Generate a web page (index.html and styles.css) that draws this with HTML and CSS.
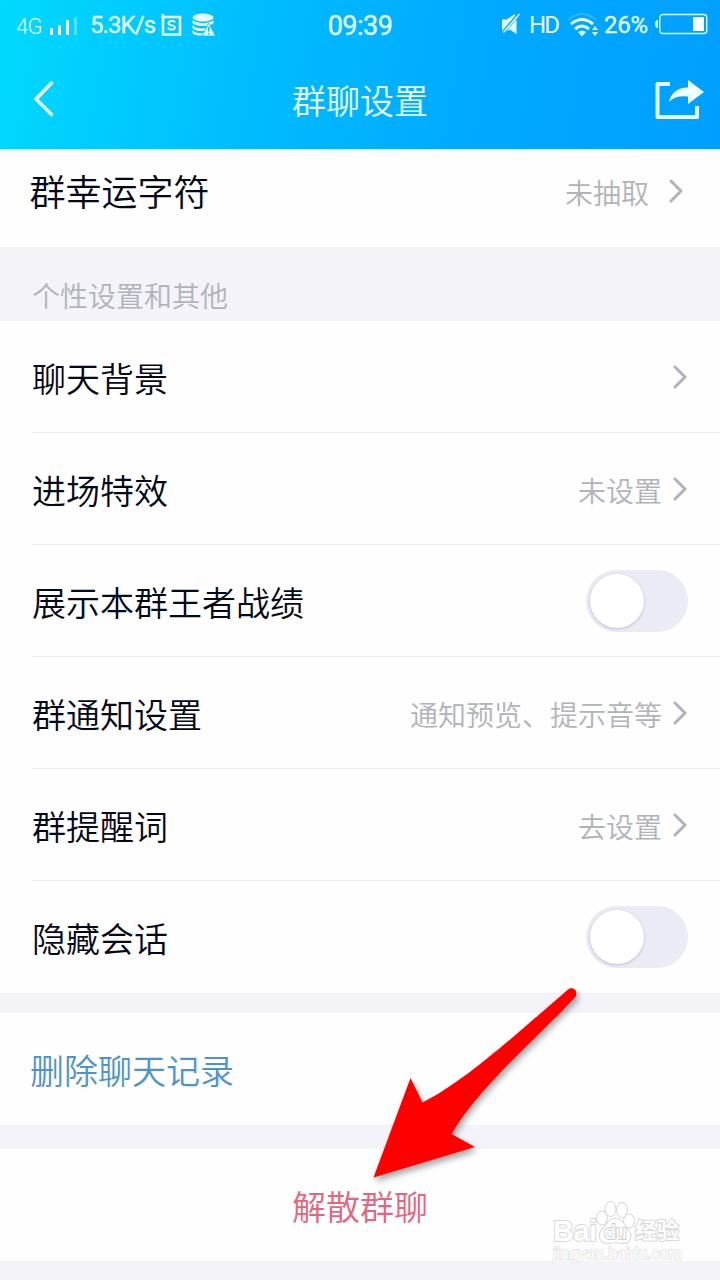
FILE: index.html
```html
<!DOCTYPE html>
<html lang="zh-CN">
<head>
<meta charset="utf-8">
<title>群聊设置</title>
<link rel="stylesheet" href="styles.css">
</head>
<body>
<div class="screen">
  <header class="header">
    <div class="status">
      <div class="status-left">
        <span class="net">4G</span>
        <svg class="signal" width="30" height="20" viewBox="0 0 30 20"><path d="M0 11h3v7H0zM8 8h3v10H8zM16 3h3v15h-3z" fill="#e6ffff"/><path d="M24 0h3v18h-3z" fill="#fff" opacity=".3"/></svg>
        <span class="speed">5.3K/s</span>
        <svg class="crop" width="22" height="24" viewBox="0 0 22 24"><path d="M2 1v20.500h17V4H0" fill="none" stroke="#e6ffff" stroke-width="2.600"/><path d="M14 9.500c-1-2.500-6.500-2-6.500.7 0 2.900 6.500 1.500 6.500 4.400 0 2.700-6 2.500-6.800 0" fill="none" stroke="#e6ffff" stroke-width="2"/></svg>
        <svg class="db" width="24" height="24" viewBox="0 0 24 24"><g fill="#e6ffff"><ellipse cx="11" cy="4.500" rx="10.500" ry="4"/><path d="M.5 7c3 4 18 4 21 0v3c-3 4-18 4-21 0zM.5 12c3 4 12 4 14 2.500l-2 3.500C8 18.300 2.500 18 .5 15zM.5 17c2 3 7 3.500 11 3l-1.500 2.500c-4 0-8-.5-9.500-2.500z"/><path d="M16.500 10l7 13H10z" stroke="#08bfff" stroke-width=".8"/></g><path d="M16.700 14v4.500M16.700 20v1.500" stroke="#00bfff" stroke-width="1.700"/></svg>
      </div>
      <span class="time">09:39</span>
      <div class="status-right">
        <svg class="mute" width="20" height="22" viewBox="0 0 20 22"><path d="M1 6.500h4.500L14 1v2L1 18zM6 17.500L15.500 6.500V21l-6-4z" fill="#e6ffff"/><path d="M2.500 19.500L18.500 1" stroke="#e6ffff" stroke-width="1.500"/></svg>
        <span class="hd">HD</span>
        <svg class="wifi" width="32" height="25" viewBox="0 0 32 25"><g fill="none" stroke="#e6ffff"><path d="M1 7Q15-5 29 7" stroke-width="2" opacity=".2"/><path d="M4 11Q15 2 26 11" stroke-width="3"/><path d="M8 16q7-6 14 0" stroke-width="3"/></g><path d="M11 19q4-3 8 0l-4 4.500zM25 17l3-4 3 4zM25 19h6l-3 4z" fill="#e6ffff"/></svg>
        <span class="pct">26%</span>
        <svg class="battery" width="53" height="22" viewBox="0 0 53 22"><rect x="4.800" y="1.500" width="47" height="19" rx="3" fill="none" stroke="#e6ffff" stroke-width="1.300"/><path d="M38 4h11v14H38z" fill="#fff"/><path d="M3 7v8Q0 15 0 11t3-4z" fill="#e6ffff"/></svg>
      </div>
    </div>
    <div class="nav">
      <svg class="back" width="22" height="38" viewBox="0 0 22 38"><path d="M18.500 3L3 19l15.500 15.500" fill="none" stroke="#e6ffff" stroke-width="3.700" stroke-linecap="round" stroke-linejoin="round"/></svg>
      <h1 class="title">群聊设置</h1>
      <svg class="share" width="50" height="40" viewBox="0 0 50 40"><path d="M15 4H2.500v33H42V26" fill="none" stroke="#e6ffff" stroke-width="4" stroke-linejoin="round"/><path d="M33 0l16 12-16 12v-7.500Q20 15 14 22 17 8 33 7.500z" fill="#f0ffff"/></svg>
    </div>
  </header>

  <main>
    <div class="row lucky"><span class="label">群幸运字符</span><span class="value">未抽取</span><svg class="chev" width="14" height="24" viewBox="0 0 14 24"><path d="M2 2l10 10L2 22"/></svg></div>
    <h2 class="section">个性设置和其他</h2>
    <div class="row"><span class="label">聊天背景</span><svg class="chev" width="14" height="24" viewBox="0 0 14 24"><path d="M2 2l10 10L2 22"/></svg></div>
    <div class="row"><span class="label">进场特效</span><span class="value">未设置</span><svg class="chev" width="14" height="24" viewBox="0 0 14 24"><path d="M2 2l10 10L2 22"/></svg></div>
    <div class="row"><span class="label">展示本群王者战绩</span><span class="switch"><span class="knob"></span></span></div>
    <div class="row"><span class="label">群通知设置</span><span class="value">通知预览、提示音等</span><svg class="chev" width="14" height="24" viewBox="0 0 14 24"><path d="M2 2l10 10L2 22"/></svg></div>
    <div class="row"><span class="label">群提醒词</span><span class="value">去设置</span><svg class="chev" width="14" height="24" viewBox="0 0 14 24"><path d="M2 2l10 10L2 22"/></svg></div>
    <div class="row last"><span class="label">隐藏会话</span><span class="switch"><span class="knob"></span></span></div>
    <div class="clear">删除聊天记录</div>
    <div class="dissolve">解散群聊</div>
  </main>

  <svg class="arrow" width="220" height="210" viewBox="0 0 220 210"><path d="M13.500 197.500L50.500 98l12 24.500C103 103 160 51 208 9.500c6-4 11 3 7 8C178 57 118 108 91.500 154l23.500 13z" fill="#f00"/></svg>

  <div class="mark">
    <div class="mark-top">
      <span class="mark-bai">Bai</span>
      <svg class="paw" width="42" height="44" viewBox="0 0 42 44"><g fill="#fff" stroke="#d8d8d8" stroke-width="2"><ellipse cx="7" cy="17" rx="5" ry="6.500"/><ellipse cx="15.500" cy="8" rx="5" ry="7"/><ellipse cx="27" cy="9" rx="5" ry="7"/><ellipse cx="34" cy="20" rx="5" ry="6.500"/><path d="M20 18c8 0 9 7 13 11 5 5 2 14-6 13-5-1-9-1-13 0-8 1-12-7-7-13 5-4 5-11 13-11z"/></g><text x="20.500" y="38" text-anchor="middle" class="du">du</text></svg>
      <span class="mark-exp">经验</span>
    </div>
    <div class="mark-url">jingyan.baidu.com</div>
  </div>
</div>
</body>
</html>
```
FILE: styles.css
```css
* { box-sizing: border-box; }
body { margin: 0; background: #f3f3f9; }
.screen {
  position: relative;
  width: 720px;
  height: 1280px;
  overflow: hidden;
  background: #f3f3f9;
  font-family: "Noto Sans CJK SC", sans-serif;
  font-weight: 350;
}
svg { display: block; flex: none; }

.header {
  height: 149px;
  color: #e6ffff;
  background: linear-gradient(100deg, #00dafe 0%, #00bcff 36%, #00aaff 65%, #009fff 100%);
}
.status {
  display: flex;
  justify-content: space-between;
  height: 50px;
  padding: 0 12px 0 16px;
  font-family: Roboto, sans-serif;
  line-height: 50px;
  white-space: nowrap;
}
.status-left, .status-right { display: flex; align-items: center; }
.status-left { width: 311px; }
.status-right { width: 314px; justify-content: flex-end; }
.net { width: 34px; font-size: 22px; padding-top: 4px; letter-spacing: -.8px; }
.signal { margin-top: 4px; }
.speed { width: 71px; margin-left: 10px; font-size: 24px; font-weight: 400; letter-spacing: -.9px; -webkit-text-stroke: .3px #e6ffff; }
.crop { margin-top: -1px; }
.db { margin-left: 9px; }
.time { font-size: 27px; font-weight: 400; letter-spacing: -.5px; padding: 1px 1px 0 0; -webkit-text-stroke: .3px #e6ffff; }
.mute { margin-right: 8px; margin-top: -2px; }
.hd { width: 38px; font-size: 24px; font-weight: 400; letter-spacing: -1.8px; }
.wifi { margin-right: 5px; }
.pct { width: 51px; font-size: 24px; font-weight: 400; letter-spacing: -.2px; -webkit-text-stroke: .3px #e6ffff; }
.battery { margin-top: -2px; }

.nav {
  display: flex;
  align-items: center;
  justify-content: space-between;
  height: 98px;
  padding: 0 15px 0 33px;
}
.title { margin: 0 0 0 15px; padding-top: 2px; font-size: 34px; font-weight: 350; line-height: 50px; }
.back { margin-right: -5px; }
.share { margin-top: 1px; }

.row {
  display: flex;
  align-items: center;
  height: 112px;
  padding: 0 32px;
  color: #03081a;
  background: linear-gradient(#ebebed, #ebebed) 32px 100% / 100% 1px no-repeat #fefefe;
}
.label { flex: 1; font-size: 34px; line-height: 50px; padding-top: 2px; }
.value { font-size: 28px; line-height: 42px; color: #b0b3bb; padding-top: 2px; margin-right: 11px; }
.chev { fill: none; stroke: #b0b3bb; stroke-width: 3; stroke-linecap: round; stroke-linejoin: round; margin-right: 1px; }
.lucky { height: 98px; padding: 0 36px 14px 29.500px; background: #fefefe; }
.lucky .label { font-size: 36px; padding: 0 0 2px; }
.lucky .value { margin-right: 20px; }
.last { background: #fefefe; }
.section {
  margin: 0;
  height: 74px;
  padding: 27px 32px 0;
  font-size: 28px;
  font-weight: 350;
  line-height: 42px;
  color: #b0b3bb;
}
.switch {
  display: flex;
  width: 102px;
  height: 62px;
  padding: 4px;
  border-radius: 31px;
  background: #ebebf6;
}
.knob { width: 54px; height: 54px; border-radius: 50%; background: #fff; box-shadow: 0 1px 3px rgba(80, 80, 120, .3); }
.clear, .dissolve { height: 112px; background: #fefefe; font-size: 34px; line-height: 114px; }
.clear { margin: 20px 0 24px; padding-left: 30px; color: #4d94cd; }
.dissolve { text-align: center; color: #e56480; }

.arrow { position: absolute; left: 360px; top: 980px; filter: drop-shadow(2px 4px 3px rgba(0, 0, 0, .35)); }

.mark { position: absolute; left: 553px; top: 1201px; width: 136px; color: #fff; font-family: "Liberation Sans", "Noto Sans CJK SC", sans-serif; }
.mark-top { display: flex; align-items: flex-end; height: 44px; font-weight: 700; -webkit-text-stroke: 2px #d8d8d8; paint-order: stroke fill; }
.mark-bai { width: 42px; font-size: 29px; line-height: 28px; letter-spacing: -.5px; }
.mark-exp { margin-left: -2px; font-size: 22px; line-height: 28px; white-space: nowrap; }
.du { font: 400 20px "Liberation Sans", sans-serif; fill: #fff; stroke: #d0d0d0; stroke-width: 2px; -webkit-text-stroke: 0; }
.mark-url { font-size: 16px; line-height: 18px; white-space: nowrap; color: #fff; -webkit-text-stroke: 1.5px #e2e2e2; paint-order: stroke fill; }
```
